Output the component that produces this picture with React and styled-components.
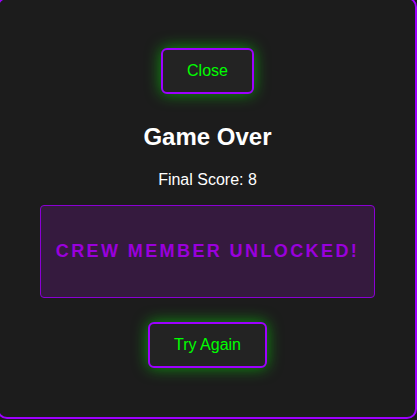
import React from 'react';
import styled, { createGlobalStyle } from 'styled-components';

const PURPLE = '#9d00ff';
const GREEN = '#00ff00';
const BACKGROUND = '#1c1c1c';

const GlobalStyle = createGlobalStyle`
  html, body {
    margin: 0;
    padding: 0;
    background: ${BACKGROUND};
    overflow: hidden;
  }
  body {
    font-family: 'Liberation Sans', Arial, sans-serif;
  }
`;

const Panel = styled.div`
  box-sizing: border-box;
  width: 420px;
  height: 422px;
  margin: -3px 0 0 -3px;
  padding: 49px 40px 0 41px;
  background: ${BACKGROUND};
  border: 2px solid ${PURPLE};
  border-radius: 10px;
  display: flex;
  flex-direction: column;
  align-items: center;
`;

const GlowButton = styled.button`
  font-family: 'Liberation Sans', Arial, sans-serif;
  font-size: 16px;
  line-height: 18px;
  color: ${GREEN};
  background: #232323;
  border: 2px solid ${PURPLE};
  border-radius: 6px;
  padding: 12px 24px;
  box-shadow: 0 0 15px rgba(0, 255, 0, 0.55);
  cursor: pointer;
  margin-top: ${(props) => props.$top || 0}px;
`;

const Title = styled.h2`
  margin: 29px 0 0;
  font-size: 24px;
  line-height: 28px;
  font-weight: 700;
  color: #ffffff;
`;

const Score = styled.p`
  margin: 20px 0 0;
  font-size: 16px;
  line-height: 18px;
  color: #ffffff;
`;

const UnlockBox = styled.div`
  box-sizing: border-box;
  align-self: stretch;
  margin-top: 16px;
  padding: 35px 8px;
  background: #351a3e;
  border: 1px solid #8a00d4;
  border-radius: 4px;
  text-align: center;
`;

const UnlockText = styled.span`
  font-size: 18px;
  line-height: 21px;
  font-weight: 700;
  letter-spacing: 2.4px;
  color: #9a00dc;
`;

const App = () => (
  <>
    <GlobalStyle />
    <Panel>
      <GlowButton>Close</GlowButton>
      <Title>Game Over</Title>
      <Score>Final Score: 8</Score>
      <UnlockBox>
        <UnlockText>CREW MEMBER UNLOCKED!</UnlockText>
      </UnlockBox>
      <GlowButton $top={24}>Try Again</GlowButton>
    </Panel>
  </>
);

export default App;
